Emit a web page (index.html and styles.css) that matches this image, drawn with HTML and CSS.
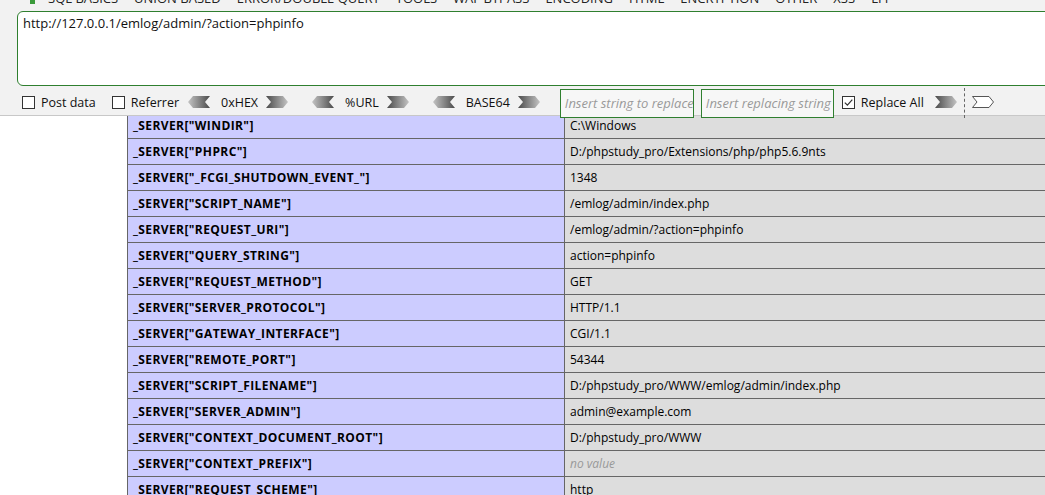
FILE: index.html
```html
<!DOCTYPE html>
<html>
<head>
<meta charset="utf-8">
<link rel="stylesheet" href="styles.css">
</head>
<body>
<div class="hackbar">
  <div class="menu">
    <span class="logo"></span>
    <span>SQL BASICS</span><span>UNION BASED</span><span>ERROR/DOUBLE QUERY</span><span>TOOLS</span><span>WAF BYPASS</span><span>ENCODING</span><span>HTML</span><span>ENCRYPTION</span><span>OTHER</span><span>XSS</span><span>LFI</span>
  </div>
  <div class="urlbox">http://127.0.0.1/emlog/admin/?action=phpinfo</div>
  <div class="tools">
    <span class="box"></span><span class="lbl">Post data</span>
    <span class="box b2"></span><span class="lbl">Referrer</span>
    <svg class="arr a1" viewBox="0 0 22 12"><defs><linearGradient id="g1" x1="0" x2="1"><stop offset="0" stop-color="#c4c4c4"/><stop offset="1" stop-color="#4a4a4a"/></linearGradient><linearGradient id="g2" x1="0" x2="1"><stop offset="0" stop-color="#4a4a4a"/><stop offset="1" stop-color="#c4c4c4"/></linearGradient></defs><polygon points="0,6 5,0 22,0 17,6 22,12 5,12" fill="url(#g1)"/></svg>
    <span class="etx">0xHEX</span>
    <svg class="arr a3" viewBox="0 0 22 12"><polygon points="0,0 17,0 22,6 17,12 0,12 5,6" fill="url(#g2)"/></svg>
    <svg class="arr a1 grp" viewBox="0 0 22 12"><polygon points="0,6 5,0 22,0 17,6 22,12 5,12" fill="url(#g1)"/></svg>
    <span class="etx">%URL</span>
    <svg class="arr a3" viewBox="0 0 22 12"><polygon points="0,0 17,0 22,6 17,12 0,12 5,6" fill="url(#g2)"/></svg>
    <svg class="arr a1 grp" viewBox="0 0 22 12"><polygon points="0,6 5,0 22,0 17,6 22,12 5,12" fill="url(#g1)"/></svg>
    <span class="etx">BASE64</span>
    <svg class="arr a3" viewBox="0 0 22 12"><polygon points="0,0 17,0 22,6 17,12 0,12 5,6" fill="url(#g2)"/></svg>
    <div class="field">Insert string to replace</div>
    <div class="field f2">Insert replacing string</div>
    <span class="box b3"><svg viewBox="0 0 11 11"><path d="M1.8 5.6 L4.4 8.2 L9.3 2.6" fill="none" stroke="#333" stroke-width="1.2"/></svg></span><span class="lbl">Replace All</span>
    <svg class="arr go" viewBox="0 0 22 12"><polygon points="0,0 17,0 22,6 17,12 0,12 5,6" fill="url(#g2)"/></svg>
    <span class="dash"></span>
    <svg class="arr out" viewBox="0 0 22 12"><polygon points="0.5,0.5 17,0.5 21.5,6 17,11.5 0.5,11.5 5,6" fill="#fff" stroke="#555" stroke-width="1"/></svg>
  </div>
</div>
<div class="page">
  <table class="info">
    <tr><td class="e">_SERVER["WINDIR"]</td><td class="v">C:\Windows</td></tr>
    <tr><td class="e">_SERVER["PHPRC"]</td><td class="v">D:/phpstudy_pro/Extensions/php/php5.6.9nts</td></tr>
    <tr><td class="e">_SERVER["_FCGI_SHUTDOWN_EVENT_"]</td><td class="v">1348</td></tr>
    <tr><td class="e">_SERVER["SCRIPT_NAME"]</td><td class="v">/emlog/admin/index.php</td></tr>
    <tr><td class="e">_SERVER["REQUEST_URI"]</td><td class="v">/emlog/admin/?action=phpinfo</td></tr>
    <tr><td class="e">_SERVER["QUERY_STRING"]</td><td class="v">action=phpinfo</td></tr>
    <tr><td class="e">_SERVER["REQUEST_METHOD"]</td><td class="v">GET</td></tr>
    <tr><td class="e">_SERVER["SERVER_PROTOCOL"]</td><td class="v">HTTP/1.1</td></tr>
    <tr><td class="e">_SERVER["GATEWAY_INTERFACE"]</td><td class="v">CGI/1.1</td></tr>
    <tr><td class="e">_SERVER["REMOTE_PORT"]</td><td class="v">54344</td></tr>
    <tr><td class="e">_SERVER["SCRIPT_FILENAME"]</td><td class="v">D:/phpstudy_pro/WWW/emlog/admin/index.php</td></tr>
    <tr><td class="e">_SERVER["SERVER_ADMIN"]</td><td class="v">admin@example.com</td></tr>
    <tr><td class="e">_SERVER["CONTEXT_DOCUMENT_ROOT"]</td><td class="v">D:/phpstudy_pro/WWW</td></tr>
    <tr><td class="e">_SERVER["CONTEXT_PREFIX"]</td><td class="v"><i class="nv">no value</i></td></tr>
    <tr><td class="e">_SERVER["REQUEST_SCHEME"]</td><td class="v">http</td></tr>
  </table>
</div>
</body>
</html>
```
FILE: styles.css
```css
html, body {
  margin: 0;
  padding: 0;
  width: 1045px;
  height: 495px;
  overflow: hidden;
  background: #fff;
  font-family: "Open Sans", "Noto Sans", sans-serif;
  color: #000;
}
.hackbar {
  display: flow-root;
  position: relative;
  z-index: 1;
  background: #f2f2f2;
  height: 116px;
  border-bottom: 1px solid #c8c8c8;
  box-sizing: border-box;
}
.menu {
  display: flex;
  align-items: center;
  height: 16px;
  margin-top: -10px;
  padding-left: 30px;
  gap: 16px;
  font-size: 13px;
  color: #222;
  white-space: nowrap;
}
.menu .logo {
  width: 5px;
  height: 12px;
  background: #3a9a3a;
  margin-right: -3px;
}
.urlbox {
  margin: 5px 0 0 17px;
  height: 75px;
  width: 1100px;
  box-sizing: border-box;
  border: 1px solid #2f7f2f;
  border-radius: 6px;
  background: #fff;
  padding: 2px 5px;
  font-size: 13px;
  line-height: 18px;
  color: #111;
}
.tools {
  display: flex;
  align-items: center;
  height: 30px;
  margin-top: 1px;
  padding-left: 22px;
  font-size: 12.5px;
  color: #111;
  white-space: nowrap;
}
.box {
  width: 11px;
  height: 11px;
  border: 1px solid #333;
  background: #fff;
  display: block;
  flex: none;
}
.box svg {
  display: block;
  width: 11px;
  height: 11px;
}
.lbl {
  margin-left: 6px;
}
.b2 {
  margin-left: 16px;
}
.arr {
  width: 22px;
  height: 12px;
  display: block;
  flex: none;
}
.a1 {
  margin-left: 9px;
}
.a1.grp {
  margin-left: 24px;
}
.etx {
  margin-left: 11px;
}
.a3 {
  margin-left: 8px;
}
.field {
  width: 134px;
  height: 29px;
  box-sizing: border-box;
  border: 1px solid #2f7f2f;
  background: #f7f7f7;
  font-style: italic;
  font-size: 13px;
  color: #9a9a9a;
  padding: 0 4px;
  line-height: 27px;
  overflow: hidden;
  margin-left: 20px;
  margin-top: 2px;
  flex: none;
}
.field.f2 {
  width: 133px;
  margin-left: 7px;
}
.b3 {
  margin-left: 8px;
}
.go {
  margin-left: 11px;
}
.dash {
  width: 0;
  height: 30px;
  border-left: 1px dashed #666;
  margin-left: 7px;
  margin-top: 2px;
}
.out {
  margin-left: 7px;
}
.page {
  padding-left: 127px;
}
.info {
  border-collapse: collapse;
  width: 934px;
  font-size: 12px;
  margin-top: -4px;
}
.info td {
  border: 1px solid #666;
  height: 26px;
  box-sizing: border-box;
  padding: 0 5px;
  vertical-align: middle;
  line-height: 16px;
}
.info .e {
  background: #ccf;
  font-weight: bold;
  letter-spacing: 0.4px;
  width: 437px;
}
.info .v {
  background: #ddd;
}
.nv {
  color: #999;
}
```
